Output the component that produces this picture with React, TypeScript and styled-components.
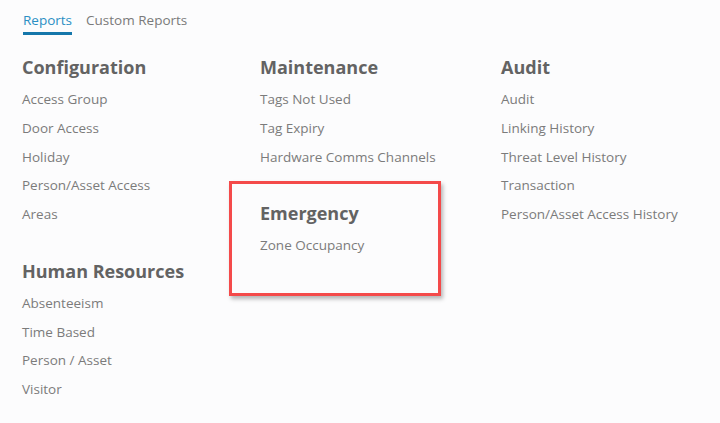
import styled, {createGlobalStyle} from 'styled-components'

const GlobalStyle = createGlobalStyle`
    html, body {
        margin: 0;
        padding: 0;
        background: #fcfcfd;
        font-family: "Open Sans", "Liberation Sans", sans-serif;
    }
`

const Page = styled.div`
    padding: 11px 0 0 22px;
    height: 423px;
    box-sizing: border-box;
`

const Tabs = styled.div`
    display: flex;
    gap: 14px;
    padding-left: 1px;
`

const Tab = styled.span<{active?: boolean}>`
    font-size: 13.5px;
    line-height: 18px;
    padding-bottom: 3px;
    border-bottom: 3px solid ${p => (p.active ? '#1577ab' : 'transparent')};
    color: ${p => (p.active ? '#2b8fc4' : '#7a7a7a')};
    cursor: pointer;
`

const Columns = styled.div`
    display: grid;
    grid-template-columns: 238px 241px 1fr;
    margin-top: 20px;
`

const Column = styled.div`
    display: flex;
    flex-direction: column;
    gap: 30px;
`

const Group = styled.section<{highlight?: boolean}>`
    position: relative;

    ${p => p.highlight && `
        &::after {
            content: '';
            position: absolute;
            top: -20px;
            left: -31px;
            width: 212px;
            height: 115px;
            box-sizing: border-box;
            border: 3px solid #f44a4a;
            box-shadow: 2px 3px 4px rgba(0, 0, 0, 0.28);
            pointer-events: none;
        }
    `}
`

const Heading = styled.h2`
    margin: 0 0 6px;
    font-size: 18px;
    line-height: 24px;
    font-weight: 700;
    color: #636363;
`

const Item = styled.a`
    display: block;
    font-size: 13.5px;
    line-height: 28.75px;
    color: #7b7b7b;
    text-decoration: none;
    cursor: pointer;
`

type Section = {title: string; items: string[]; highlight?: boolean}

const columns: Section[][] = [
    [
        {title: 'Configuration', items: ['Access Group', 'Door Access', 'Holiday', 'Person/Asset Access', 'Areas']},
        {title: 'Human Resources', items: ['Absenteeism', 'Time Based', 'Person / Asset', 'Visitor']},
    ],
    [
        {title: 'Maintenance', items: ['Tags Not Used', 'Tag Expiry', 'Hardware Comms Channels']},
        {title: 'Emergency', items: ['Zone Occupancy'], highlight: true},
    ],
    [
        {title: 'Audit', items: ['Audit', 'Linking History', 'Threat Level History', 'Transaction', 'Person/Asset Access History']},
    ],
]

const App = () => (
    <>
        <GlobalStyle />
        <Page>
            <Tabs>
                <Tab active>Reports</Tab>
                <Tab>Custom Reports</Tab>
            </Tabs>

            <Columns>
                {columns.map((sections, idx) => (
                    <Column key={idx}>
                        {sections.map(({title, items, highlight}) => (
                            <Group key={title} highlight={highlight}>
                                <Heading>{title}</Heading>
                                {items.map(item => (
                                    <Item key={item}>{item}</Item>
                                ))}
                            </Group>
                        ))}
                    </Column>
                ))}
            </Columns>
        </Page>
    </>
)

export default App
